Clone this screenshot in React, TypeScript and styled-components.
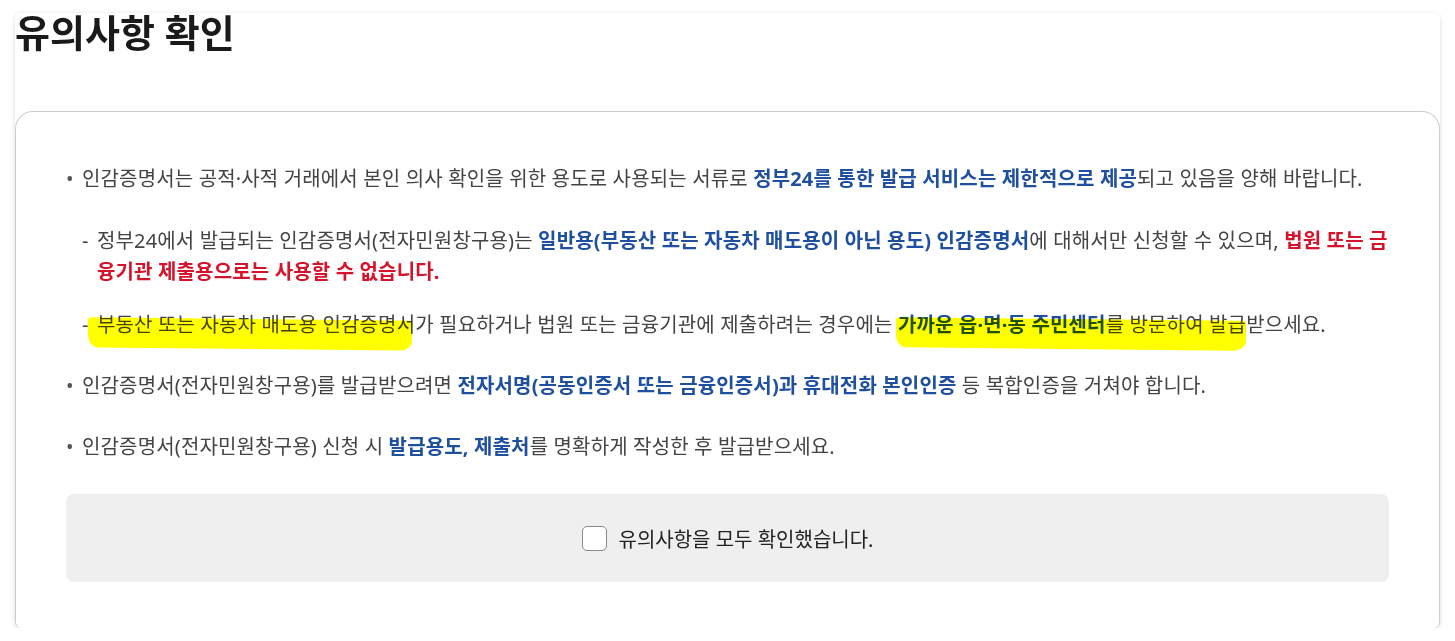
import React from "react";
import styled, { createGlobalStyle } from "styled-components";

const GlobalStyle = createGlobalStyle`
  body {
    margin: 0;
    background: #ffffff;
    font-family: "Noto Sans", "Noto Sans CJK KR", sans-serif;
  }
`;

const Panel = styled.section`
  margin: 15px 15px 0 15px;
  width: 1425px;
  background: #ffffff;
  border-radius: 6px;
  box-shadow: 0 1px 5px rgba(0, 0, 0, 0.14);
`;

const Title = styled.h2`
  margin: -2px 0 0 0;
  font-size: 38px;
  line-height: 1;
  font-weight: 700;
  color: #1a1a1a;
`;

const NoticeCard = styled.div`
  margin-top: 60px;
  border: 1px solid #cccccc;
  border-bottom: none;
  border-radius: 18px 18px 6px 6px;
  padding: 51px 50px 46px 50px;
`;

const List = styled.ul`
  list-style: none;
  margin: 0;
  padding: 0;
  font-size: 20px;
  line-height: 31px;
  letter-spacing: 0.15px;
  color: #444444;
`;

const Item = styled.li`
  position: relative;
  padding-left: 16px;

  & + & {
    margin-top: 30px;
  }

  &::before {
    content: "•";
    position: absolute;
    left: 0;
    top: 0;
    color: #555555;
  }
`;

const SubList = styled.ul`
  list-style: none;
  margin: 31px 0 0 0;
  padding: 0;
`;

const SubItem = styled.li`
  position: relative;
  padding-left: 15px;

  & + & {
    margin-top: 22px;
  }

  &::before {
    content: "-";
    position: absolute;
    left: 0;
    top: 0;
  }
`;

const Strong = styled.strong<{ $tone?: "blue" | "red" }>`
  font-weight: 700;
  color: ${(p) => (p.$tone === "red" ? "#d5142b" : "#1f4f9f")};
`;

const Marker = styled.span<{ $left: number; $right: number }>`
  position: relative;

  &::after {
    content: "";
    position: absolute;
    left: ${(p) => -p.$left}px;
    right: ${(p) => -p.$right}px;
    top: 8px;
    height: 30px;
    background: #ffff00;
    mix-blend-mode: multiply;
    border-radius: 4px 3px 12px 10px / 3px 4px 10px 12px;
    transform: skewY(0.6deg);
    pointer-events: none;
  }
`;

const ConfirmBox = styled.label`
  margin-top: 32px;
  height: 88px;
  border-radius: 8px;
  background: #efefef;
  display: flex;
  align-items: center;
  justify-content: center;
  gap: 12px;
  font-size: 20px;
  color: #222222;
  cursor: pointer;
`;

const CheckBox = styled.input.attrs({ type: "checkbox" })`
  appearance: none;
  margin: 0;
  width: 25px;
  height: 25px;
  border: 1.5px solid #8a8a8a;
  border-radius: 5px;
  background: #ffffff;
`;

export default function App() {
  return (
    <>
      <GlobalStyle />
      <Panel>
        <Title>유의사항 확인</Title>
        <NoticeCard>
          <List>
            <Item>
              인감증명서는 공적·사적 거래에서 본인 의사 확인을 위한 용도로 사용되는 서류로{" "}
              <Strong>정부24를 통한 발급 서비스는 제한적으로 제공</Strong>되고 있음을 양해 바랍니다.
              <SubList>
                <SubItem>
                  정부24에서 발급되는 인감증명서(전자민원창구용)는{" "}
                  <Strong>일반용(부동산 또는 자동차 매도용이 아닌 용도) 인감증명서</Strong>에 대해서만
                  신청할 수 있으며, <Strong $tone="red">법원 또는 금융기관 제출용으로는 사용할 수 없습니다.</Strong>
                </SubItem>
                <SubItem>
                  <Marker $left={9} $right={-3}>부동산 또는 자동차 매도용 인감증명서</Marker>가 필요하거나 법원 또는
                  금융기관에 제출하려는 경우에는{" "}
                  <Marker $left={2} $right={140}>
                    <Strong>가까운 읍·면·동 주민센터</Strong>
                  </Marker>
                  를 방문하여 발급받으세요.
                </SubItem>
              </SubList>
            </Item>
            <Item>
              인감증명서(전자민원창구용)를 발급받으려면{" "}
              <Strong>전자서명(공동인증서 또는 금융인증서)과 휴대전화 본인인증</Strong> 등 복합인증을
              거쳐야 합니다.
            </Item>
            <Item>
              인감증명서(전자민원창구용) 신청 시 <Strong>발급용도, 제출처</Strong>를 명확하게 작성한 후
              발급받으세요.
            </Item>
          </List>
          <ConfirmBox>
            <CheckBox />
            유의사항을 모두 확인했습니다.
          </ConfirmBox>
        </NoticeCard>
      </Panel>
    </>
  );
}
